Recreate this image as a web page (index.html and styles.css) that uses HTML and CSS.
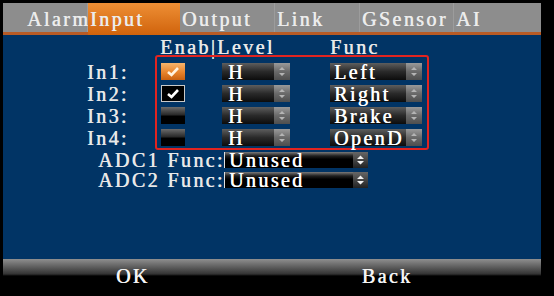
FILE: index.html
```html
<!DOCTYPE html>
<html lang="en">
<head>
    <meta charset="UTF-8">
    <title>Input</title>
    <link rel="stylesheet" href="styles.css">
</head>
<body>
    <div class="screen">
        <div class="tabs">
            <div class="tab first">Alarm</div>
            <div class="tab active">Input</div>
            <div class="tab w95">Output</div>
            <div class="tab w85">Link</div>
            <div class="tab w94">GSensor</div>
            <div class="tab last">AI</div>
        </div>

        <div class="main">
            <div class="head">
                <span class="enab">Enab|Level</span>
                <span class="func">Func</span>
            </div>

            <div class="inputs">
                <div class="names">
                    <div>In1:</div>
                    <div>In2:</div>
                    <div>In3:</div>
                    <div>In4:</div>
                </div>
                <div class="box">
                    <div class="row">
                        <div class="chk orange">
                            <svg width="24" height="17" viewBox="0 0 24 17"><path d="M7 9 L10.5 12 L17 5" fill="none" stroke="#fff3e0" stroke-width="2.6"/></svg>
                        </div>
                        <div class="sel level"><span class="val">H</span><span class="spin"><svg width="16" height="17" viewBox="0 0 16 17"><path d="M5 7 L8 4 L11 7 Z M5 10 L8 13 L11 10 Z" fill="#b4b4b4"/></svg></span></div>
                        <div class="sel fn"><span class="val">Left</span><span class="spin"><svg width="16" height="17" viewBox="0 0 16 17"><path d="M5 7 L8 4 L11 7 Z M5 10 L8 13 L11 10 Z" fill="#b4b4b4"/></svg></span></div>
                    </div>
                    <div class="row">
                        <div class="chk black">
                            <svg width="22" height="15" viewBox="0 0 22 15"><path d="M6 8 L9.5 11 L16 4" fill="none" stroke="#fff" stroke-width="2.6"/></svg>
                        </div>
                        <div class="sel level"><span class="val">H</span><span class="spin"><svg width="16" height="17" viewBox="0 0 16 17"><path d="M5 7 L8 4 L11 7 Z M5 10 L8 13 L11 10 Z" fill="#b4b4b4"/></svg></span></div>
                        <div class="sel fn"><span class="val">Right</span><span class="spin"><svg width="16" height="17" viewBox="0 0 16 17"><path d="M5 7 L8 4 L11 7 Z M5 10 L8 13 L11 10 Z" fill="#b4b4b4"/></svg></span></div>
                    </div>
                    <div class="row">
                        <div class="chk off"></div>
                        <div class="sel level"><span class="val">H</span><span class="spin"><svg width="16" height="17" viewBox="0 0 16 17"><path d="M5 7 L8 4 L11 7 Z M5 10 L8 13 L11 10 Z" fill="#b4b4b4"/></svg></span></div>
                        <div class="sel fn"><span class="val">Brake</span><span class="spin"><svg width="16" height="17" viewBox="0 0 16 17"><path d="M5 7 L8 4 L11 7 Z M5 10 L8 13 L11 10 Z" fill="#b4b4b4"/></svg></span></div>
                    </div>
                    <div class="row">
                        <div class="chk off"></div>
                        <div class="sel level"><span class="val">H</span><span class="spin"><svg width="16" height="17" viewBox="0 0 16 17"><path d="M5 7 L8 4 L11 7 Z M5 10 L8 13 L11 10 Z" fill="#b4b4b4"/></svg></span></div>
                        <div class="sel fn"><span class="val">OpenD</span><span class="spin"><svg width="16" height="17" viewBox="0 0 16 17"><path d="M5 7 L8 4 L11 7 Z M5 10 L8 13 L11 10 Z" fill="#b4b4b4"/></svg></span></div>
                    </div>
                </div>
            </div>

            <div class="adc">
                <div class="adc-row">
                    <span class="adc-label">ADC1 Func:</span>
                    <div class="drop"><span class="val">Unused</span><span class="dspin"><svg width="15" height="16" viewBox="0 0 15 16"><path d="M4 7 L7.5 3.5 L11 7 Z M4 9 L7.5 12.5 L11 9 Z" fill="#f0f0f0"/></svg></span></div>
                </div>
                <div class="adc-row">
                    <span class="adc-label">ADC2 Func:</span>
                    <div class="drop"><span class="val">Unused</span><span class="dspin"><svg width="15" height="16" viewBox="0 0 15 16"><path d="M4 7 L7.5 3.5 L11 7 Z M4 9 L7.5 12.5 L11 9 Z" fill="#f0f0f0"/></svg></span></div>
                </div>
            </div>
        </div>

        <div class="footer">
            <span class="ok">OK</span>
            <span class="back">Back</span>
        </div>
    </div>
</body>
</html>
```

FILE: styles.css
```css
body {
    margin: 0;
    padding: 3px 0 0 3px;
    background: #000;
    font-family: "Liberation Serif", serif;
    font-size: 20px;
    letter-spacing: 2.4px;
    color: #e8e8e8;
    text-shadow: 0.5px 0 0 currentColor;
    overflow: hidden;
}
.screen {
    width: 538px;
    height: 293px;
}

/* tab bar */
.tabs {
    display: flex;
    height: 29px;
    background: #8d8d8d;
    border-bottom: 3px solid #b85b25;
}
.tab {
    box-sizing: border-box;
    width: 92px;
    height: 29px;
    padding: 3px 0 0 2px;
    line-height: 26px;
    white-space: nowrap;
    border-right: 1px solid #9c9c9c;
    color: #ececec;
}
.tab.first { width: 85px; padding-left: 24px; }
.tab.active {
    height: 32px;
    background: linear-gradient(#ee8f35, #d0630c);
    border-right: none;
}
.w95 { width: 95px; }
.w85 { width: 85px; }
.w94 { width: 94px; }
.tab.last { flex: 1; border-right: none; }

/* blue body */
.main {
    height: 224px;
    background: #013465;
}
.head {
    display: flex;
    height: 20px;
    padding-top: 2px;
    line-height: 20px;
}
.enab { width: 170px; margin-left: 157px; white-space: nowrap; }

.inputs {
    display: flex;
    margin-top: -2px;
}
.names {
    width: 68px;
    margin-left: 84px;
    padding-top: 6px;
    line-height: 22px;
}
.box {
    width: 265px;
    padding: 6px 1px 2px 4px;
    border: 2px solid #e22420;
    border-radius: 3px;
}
.row {
    display: flex;
    height: 17px;
    margin-bottom: 5px;
}
.row:last-child { margin-bottom: 0; }

.chk {
    box-sizing: border-box;
    width: 24px;
    height: 17px;
}
.chk svg { display: block; }
.chk.orange { background: linear-gradient(#f6b46c, #e8842c 55%, #c9600f); }
.chk.black { background: #000; border: 1px solid #c8c8c8; }
.chk.off { background: linear-gradient(#6c6c6c, #2a2a2a 45%, #000 55%, #000); }

.sel {
    display: flex;
    height: 17px;
    line-height: 18px;
    color: #fff;
    background: linear-gradient(#5e5e5e, #2a2a2a 50%, #0c0c0c);
}
.sel.level { width: 68px; margin-left: 37px; }
.sel.fn { width: 92px; margin-left: 40px; }
.sel .val { flex: 1; padding-left: 4px; white-space: nowrap; }
.sel.level .val { padding-left: 6px; }
.spin {
    width: 16px;
    height: 17px;
    background: linear-gradient(#9a9a9a, #6a6a6a 50%, #4e4e4e);
}
.spin svg { display: block; }

/* analog rows */
.adc { margin-top: 2px; }
.adc-row {
    display: flex;
    height: 20px;
    line-height: 16px;
}
.adc-label { width: 126px; margin-left: 95px; white-space: nowrap; }
.drop {
    display: flex;
    width: 143px;
    height: 16px;
    border-left: 1px solid #e0e0e0;
    color: #fff;
    background: linear-gradient(#7a7a7a, #1e1e1e 25%, #000 45%);
}
.drop .val { flex: 1; padding-left: 4px; }
.dspin {
    width: 15px;
    height: 16px;
    background: linear-gradient(#666, #222);
}
.dspin svg { display: block; }

/* bottom bar */
.footer {
    display: flex;
    height: 32px;
    padding-top: 5px;
    line-height: 25px;
    color: #f4f4f4;
    background: linear-gradient(#8f8f8f, #6a6a6a 6px, #333 15px, #000 17px);
}
.ok { margin-left: 113px; }
.back { margin-left: 212px; }
```
